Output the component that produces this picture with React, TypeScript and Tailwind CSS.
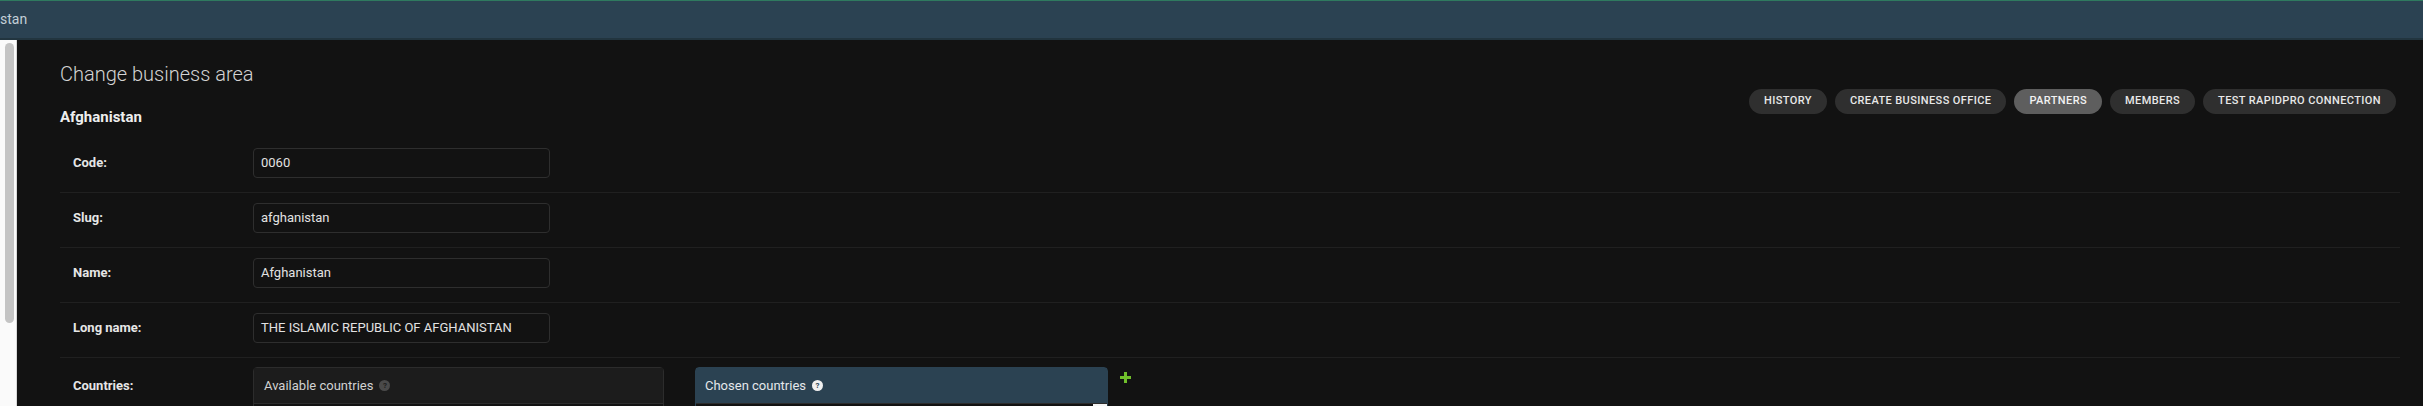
const FIELDS = [
  { label: "Code:", value: "0060" },
  { label: "Slug:", value: "afghanistan" },
  { label: "Name:", value: "Afghanistan" },
  { label: "Long name:", value: "THE ISLAMIC REPUBLIC OF AFGHANISTAN" },
];

const TOOLS = [
  { label: "History", active: false },
  { label: "Create business office", active: false },
  { label: "Partners", active: true },
  { label: "Members", active: false },
  { label: "Test RapidPro connection", active: false },
];

function HelpDot({ light }: { light?: boolean }) {
  return (
    <span
      className={
        light
          ? "ml-[6px] inline-flex h-[11px] w-[11px] items-center justify-center rounded-full bg-[#f0f0f0] text-[8px] font-bold leading-none text-[#2b4252]"
          : "ml-[6px] inline-flex h-[11px] w-[11px] items-center justify-center rounded-full bg-[#4a4a4a] text-[8px] font-bold leading-none text-[#1d1d1d]"
      }
    >
      ?
    </span>
  );
}

export default function App() {
  return (
    <div
      className="flex h-[406px] w-full flex-col overflow-hidden bg-[#121212] text-[#e6e6e6]"
      style={{ fontFamily: "Roboto, 'Liberation Sans', sans-serif" }}
    >
      {/* breadcrumbs */}
      <div className="h-[40px] shrink-0 border-t border-[#2f7a5f] border-b-2 border-b-[#22353f] bg-[#2b4252]">
        <div className="flex h-full items-center text-[14px] text-[#c3cfd7]">stan</div>
      </div>

      <div className="flex min-h-0 flex-1">
        {/* sidebar scrollbar */}
        <div className="w-[17px] shrink-0 border-r border-[#d8d8d8] bg-[#fafafa] pl-[5px] pt-[3px]">
          <div className="h-[280px] w-[9px] rounded-full bg-[#c4c4c4]" />
        </div>

        <div className="flex-1 pl-[43px] pr-[23px] pt-[22px]">
          <div className="flex items-start justify-between">
            <div>
              <h1 className="text-[20px] font-light leading-[24px] text-[#d4d4d4]">Change business area</h1>
              <h2 className="mt-[22px] text-[15px] font-bold leading-[18px] text-[#eeeeee]">Afghanistan</h2>
            </div>
            <div className="mr-[4px] mt-[27px] flex gap-2">
              {TOOLS.map((t) => (
                <span
                  key={t.label}
                  className={
                    t.active
                      ? "flex h-[25px] items-center rounded-full bg-[#5e5e5e] px-[15px] text-[11px] font-medium uppercase tracking-[0.4px] text-[#f2f2f2]"
                      : "flex h-[25px] items-center rounded-full bg-[#2f2f2f] px-[15px] text-[11px] font-medium uppercase tracking-[0.4px] text-[#e8e8e8]"
                  }
                >
                  {t.label}
                </span>
              ))}
            </div>
          </div>

          <div className="mt-[12px]">
            {FIELDS.map((f) => (
              <div key={f.label} className="flex items-center border-b border-[#202020] pb-[14px] pl-[13px] pt-[10px]">
                <label className="w-[180px] text-[13px] font-bold text-[#e6e6e6]">{f.label}</label>
                <div className="flex h-[30px] w-[297px] items-center rounded-[4px] border border-[#2e2e2e] px-[7px] text-[13px] text-[#e2e2e2]">
                  {f.value}
                </div>
              </div>
            ))}

            <div className="flex items-start pl-[13px] pt-[9px]">
              <label className="w-[180px] pt-[9px] text-[13px] font-bold text-[#e6e6e6]">Countries:</label>
              <div className="flex items-start">
                <div className="w-[411px] rounded-t-[4px] border border-[#2c2c2c]">
                  <div className="flex h-[35px] items-center bg-[#1c1c1c] pl-[10px] text-[13px] text-[#d2d2d2]">
                    Available countries
                    <HelpDot />
                  </div>
                  <div className="h-[200px] border-t border-[#2c2c2c]" />
                </div>
                <div className="ml-[31px] w-[413px] rounded-t-[4px] border border-[#2b4252]">
                  <div className="flex h-[35px] items-center bg-[#2b4252] pl-[9px] text-[13px] text-[#e4e8eb]">
                    Chosen countries
                    <HelpDot light />
                  </div>
                  <div className="flex h-[200px] justify-between border-t border-[#2c2c2c] pl-[9px]">
                    <span className="pt-[2px] text-[13px] text-[#cfcfcf]">Afghanistan</span>
                    <div className="h-[200px] w-[14px] bg-[#f4f4f4]" />
                  </div>
                </div>
                <svg className="ml-[12px] mt-[5px]" width="11" height="11" viewBox="0 0 11 11">
                  <path d="M4 0h3v4h4v3H7v4H4V7H0V4h4z" fill="#70bf2b" />
                </svg>
              </div>
            </div>
          </div>
        </div>
      </div>
    </div>
  );
}
